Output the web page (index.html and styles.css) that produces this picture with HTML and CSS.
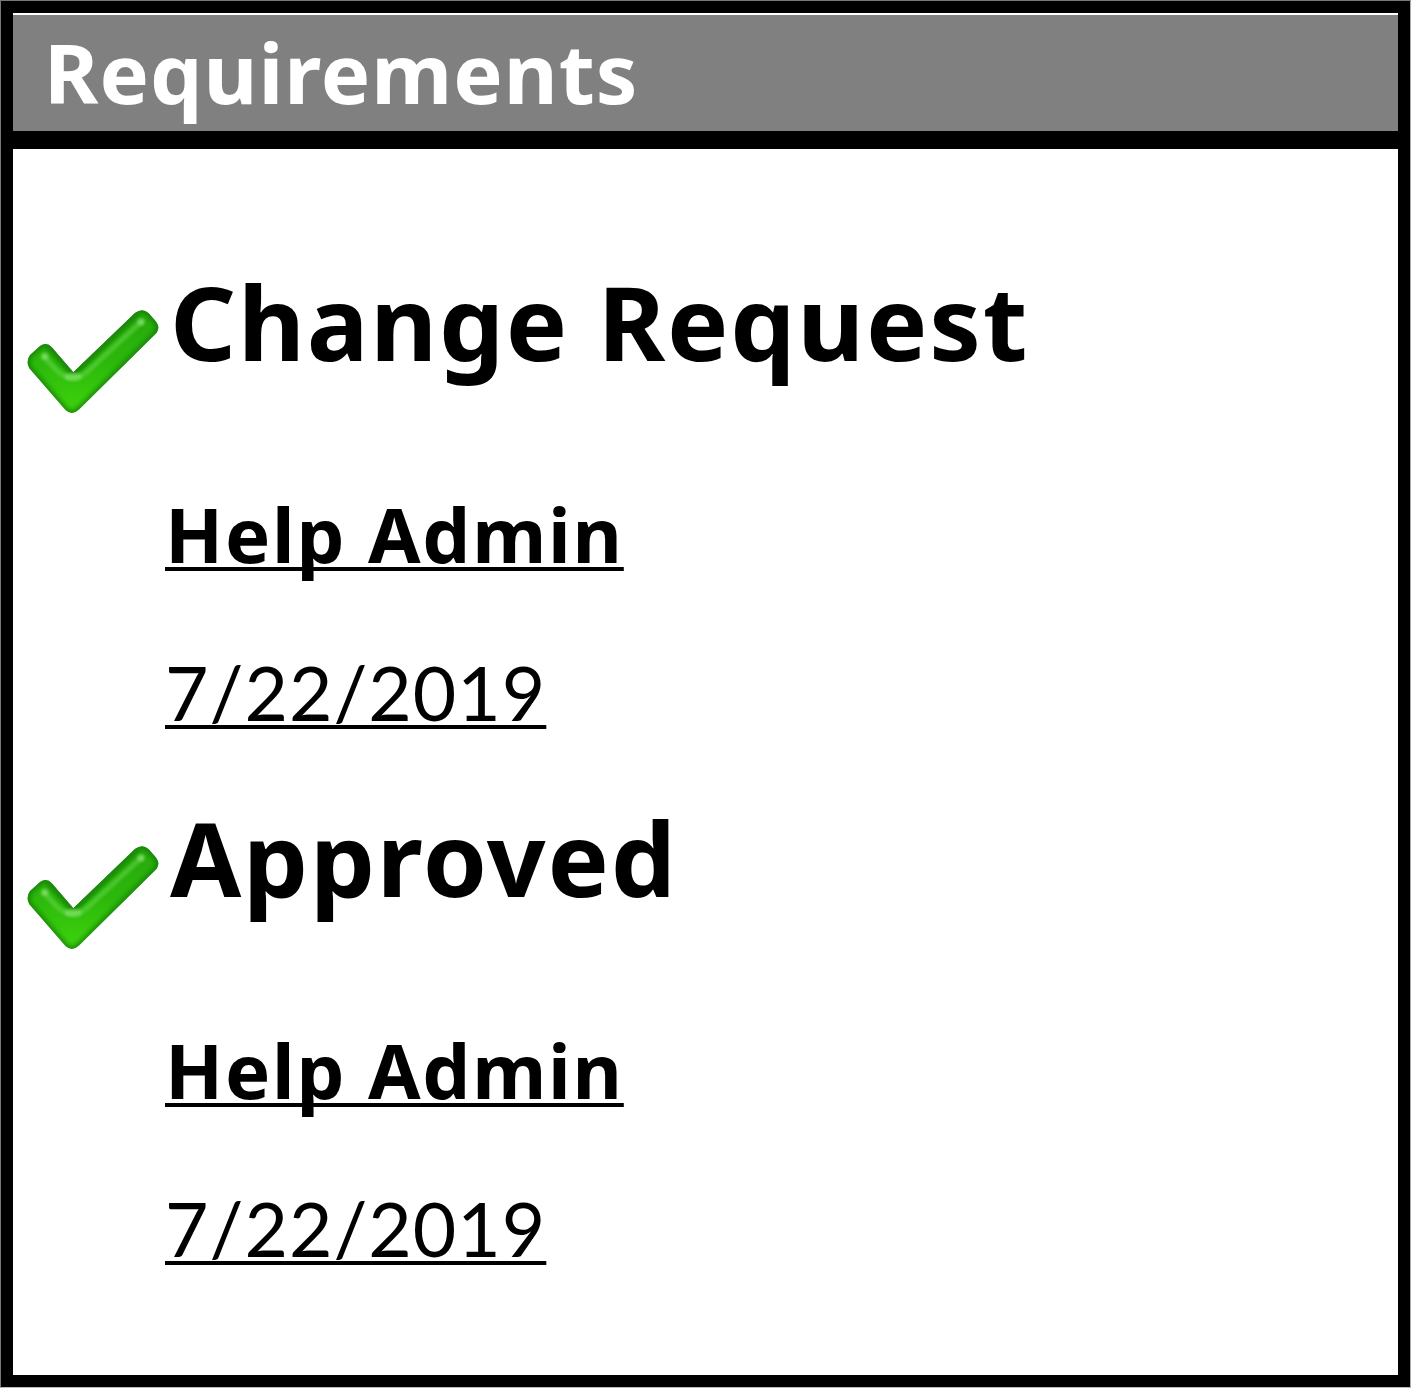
FILE: index.html
```html
<!DOCTYPE html>
<html lang="en">

<head>
    <meta charset="UTF-8" />
    <meta name="viewport" content="width=device-width, initial-scale=1.0" />
    <title>Requirements</title>
    <link rel="stylesheet" href="styles.css">
</head>

<body>
    <!-- Shared check mark -->
    <svg class="defs" width="0" height="0" aria-hidden="true">
        <defs>
            <linearGradient id="green" x1="0" y1="0" x2="0" y2="1">
                <stop offset="0" stop-color="#26a80c" />
                <stop offset="0.5" stop-color="#2cb80c" />
                <stop offset="1" stop-color="#3ed40c" />
            </linearGradient>
            <filter id="soft" x="-20%" y="-20%" width="140%" height="140%">
                <feGaussianBlur stdDeviation="2.6" />
            </filter>
            <filter id="glow" x="-50%" y="-50%" width="200%" height="200%">
                <feGaussianBlur stdDeviation="1.8" />
            </filter>
            <path id="shape" d="M3.3 59.3Q-.5 52 4 46L14 37Q20.500 32.500 26 38.500L47.300 63.300L109 4Q116.500-1.500 122.500 4L130 12.500Q134.500 18.500 130.500 24L53 100.500Q46 107 39.500 101Z" />
            <clipPath id="clip"><use href="#shape" /></clipPath>
            <symbol id="check" viewBox="0 0 134 106">
                <use href="#shape" fill="url(#green)" />
                <g clip-path="url(#clip)" fill="none" stroke-linecap="round">
                    <use href="#shape" stroke="#187808" stroke-width="4.500" filter="url(#soft)" />
                    <path d="M25 38L47.300 63.300L109 4" stroke="#1c8808" stroke-width="7" filter="url(#soft)" />
                    <path d="M18.700 48L29 60Q46 76 62 62L115 13" stroke="#65d448" stroke-width="5" opacity="0.6" filter="url(#glow)" />
                    <ellipse cx="47" cy="68" rx="9" ry="4" fill="#8ae870" opacity="0.6" filter="url(#glow)" />
                    <circle cx="18.700" cy="47.500" r="3.500" fill="#88e070" opacity="0.75" filter="url(#glow)" />
                    <circle cx="115" cy="13" r="3.500" fill="#88e070" opacity="0.75" filter="url(#glow)" />
                </g>
            </symbol>
        </defs>
    </svg>

    <div class="panel">
        <h1 class="panel-header">Requirements</h1>
        <div class="panel-body">
            <div class="requirement">
                <div class="title-row">
                    <svg class="check"><use href="#check" /></svg>
                    <h2 class="title">Change Request</h2>
                </div>
                <a class="user">Help Admin</a>
                <a class="date">7/22/2019</a>
            </div>
            <div class="requirement">
                <div class="title-row">
                    <svg class="check"><use href="#check" /></svg>
                    <h2 class="title">Approved</h2>
                </div>
                <a class="user">Help Admin</a>
                <a class="date">7/22/2019</a>
            </div>
        </div>
    </div>
</body>

</html>
```
FILE: styles.css
```css
* {
    box-sizing: border-box;
}

body {
    font-family: "Noto Sans", sans-serif;
    background: #fff;
    color: #000;
    margin: 0;
}

.defs {
    display: block;
}

.panel {
    width: 1411px;
    height: 1388px;
    border: 1px solid #777;
    border-right-color: #aaa;
    border-bottom-color: #bbb;
    box-shadow: inset 0 0 0 12px #000;
    padding: 12px;
}

.panel-header {
    height: 136px;
    margin: 0;
    padding-left: 31px;
    border-top: 2px solid #fff;
    border-bottom: 18px solid #000;
    background: #808080;
    color: #fff;
    font-size: 83px;
    line-height: 113px;
    letter-spacing: 1px;
    white-space: nowrap;
}

.panel-body {
    padding: 112px 0 0 13px;
}

.requirement {
    display: flex;
    flex-direction: column;
    align-items: flex-start;
    height: 536px;
    white-space: nowrap;
}

.title-row {
    display: flex;
    gap: 10px;
    height: 120px;
    margin-bottom: 103px;
}

.check {
    width: 134px;
    height: 106px;
    margin-top: 48px;
}

.title {
    margin: 0;
    font-size: 103px;
    line-height: 121px;
    letter-spacing: 1.8px;
}

.user,
.date {
    margin-left: 139px;
    line-height: 100px;
    text-decoration: underline;
    text-decoration-thickness: 4px;
    text-decoration-skip-ink: none;
    text-underline-offset: 4px;
}

.user {
    margin-bottom: 58px;
    font-size: 76px;
    font-weight: bold;
    letter-spacing: 1.8px;
}

.date {
    font-family: Lato, sans-serif;
    font-size: 75px;
    letter-spacing: 1px;
}
```
